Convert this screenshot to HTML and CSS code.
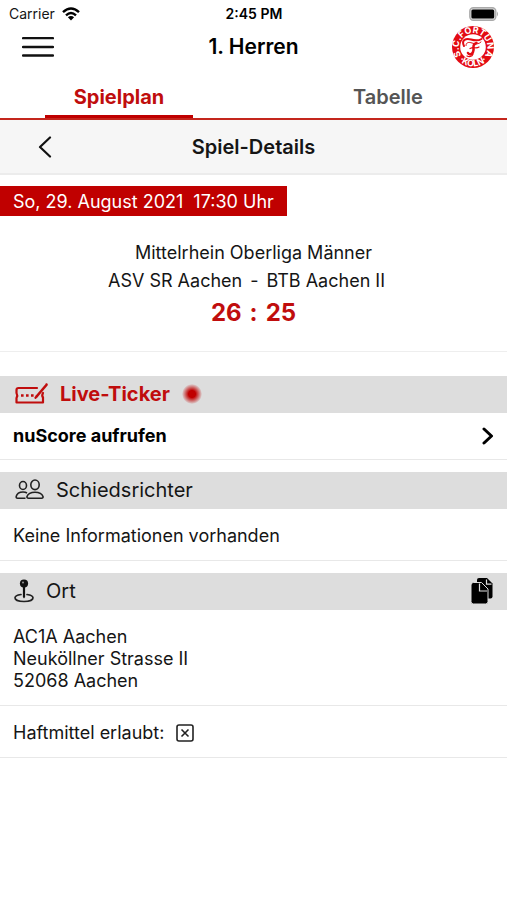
FILE: index.html
```
<!DOCTYPE html>
<html lang="de">
<head>
<meta charset="utf-8">
<meta name="viewport" content="width=device-width, initial-scale=1">
<title>Spiel-Details</title>
<link rel="stylesheet" href="styles.css">
</head>
<body>
<div class="status">
  <div class="carrier">
    <span>Carrier</span>
    <svg width="18" height="14" viewBox="0 0 18 14" aria-hidden="true">
      <g fill="none" stroke="#000" stroke-width="2.4">
        <path d="M1 5.2Q9-2.4 17 5.2"/>
        <path d="M4 8.4Q9 3.8 14 8.4"/>
      </g>
      <path d="M5.9 10.2Q9 7.6 12.1 10.2L9 13.6Z"/>
    </svg>
  </div>
  <span class="time">2:45 PM</span>
  <svg class="battery" width="30" height="14" viewBox="0 0 30 14" aria-hidden="true">
    <rect x=".8" y=".8" width="26" height="12.4" rx="3.5" fill="#ddd" stroke="#aaa" stroke-width="1.4"/>
    <rect x="2.4" y="2.4" width="22.8" height="9.2" rx="1.500"/>
    <path d="M28 4.5q2 2.500 0 5z" fill="#aaa"/>
  </svg>
</div>
<header class="topbar">
  <button class="icon-button menu" aria-label="Menü">
    <svg width="32" height="22" viewBox="0 0 32 22"><path d="M1 2.200H31M1 11H31M1 19.500H31" stroke="#111" stroke-width="2.300" stroke-linecap="round"/></svg>
  </button>
  <h1>1. Herren</h1>
  <svg class="club" width="42" height="42" viewBox="0 0 42 42" role="img" aria-label="S.C. Fortuna Köln">
    <defs>
      <path id="ring-top" d="M9 29A14.300 14.300 0 1 1 33 29"/>
      <path id="ring-bottom" d="M1.500 24A19.800 19.800 0 0 0 40.500 24"/>
    </defs>
    <circle cx="21" cy="21" r="21" fill="#e30b13"/>
    <circle cx="21" cy="21" r="12.800" fill="#fff"/>
    <g class="club-text">
      <text><textPath href="#ring-top" startOffset="50%" text-anchor="middle">S.C.FORTUNA</textPath></text>
      <text><textPath href="#ring-bottom" startOffset="50%" text-anchor="middle">·KÖLN·</textPath></text>
    </g>
    <g fill="none" stroke="#e30b13" stroke-linecap="round">
      <path d="M12 20C9 14 14 12 19 13.500C24 15 27 14.500 29.500 13" stroke-width="2"/>
      <path d="M14 19.500C14 16 17 16 20 17C24 18.500 27 18 29 16" stroke-width="1"/>
      <path d="M24.500 17C19 19 23 22 21 26C20 29 17 29 16 27" stroke-width="2.600"/>
      <path d="M18 22.500C22 20.500 24 23 27 21M21 28C20 31 17 31 15 30" stroke-width="1.200"/>
    </g>
  </svg>
</header>
<nav class="tabs">
  <a class="tab active" href="#spielplan" aria-current="page">Spielplan</a>
  <a class="tab" href="#tabelle">Tabelle</a>
</nav>
<div class="subbar">
  <button class="icon-button" aria-label="Zurück">
    <svg width="14" height="22" viewBox="0 0 14 22"><path d="M12 1.500L2 11L12 20.500" fill="none" stroke="#111" stroke-width="2.200" stroke-linecap="round" stroke-linejoin="round"/></svg>
  </button>
  <h2>Spiel-Details</h2>
</div>
<main>
  <section class="match">
    <p class="date"><span>So, 29. August 2021</span><span>17:30 Uhr</span></p>
    <div class="result">
      <p>Mittelrhein Oberliga Männer</p>
      <p class="teams"><span>ASV SR Aachen</span><span>-</span><span>BTB Aachen II</span></p>
      <p class="score"><span>26</span><span>:</span><span>25</span></p>
    </div>
  </section>
  <section class="block">
    <h3 class="bar live">
      <svg width="34" height="22" viewBox="0 0 34 22" aria-hidden="true">
        <g fill="none" stroke="#c00d0d" stroke-width="2.200" stroke-linecap="round" stroke-linejoin="round">
          <path d="M23 5H4.500Q2.500 5 2.500 7V10Q4 12.500 2.500 15V19.500H29V14.500Q27.500 12.500 29 10"/>
          <path d="M23 13L31.500 3" stroke-width="2.600"/>
          <path d="M21.500 14.800L23 13"/>
        </g>
        <path d="M31 1L33 0L34 2L32.500 3.500Z" fill="#c00d0d"/>
        <path d="M7 11.200h2.600v2.600H7zM12 11.200h2.600v2.600H12zM17 11.200h2.600v2.600H17z" fill="#c00d0d"/>
      </svg>
      <span>Live-Ticker</span>
      <i class="pulse"></i>
    </h3>
    <a class="row link" href="#nuscore">
      <span>nuScore aufrufen</span>
      <svg width="12" height="18" viewBox="0 0 12 18" aria-hidden="true"><path d="M2 2L9.500 9L2 16" fill="none" stroke="#000" stroke-width="3" stroke-linecap="round" stroke-linejoin="round"/></svg>
    </a>
  </section>
  <section class="block">
    <h3 class="bar">
      <svg width="30" height="22" viewBox="0 0 30 22" fill="none" stroke="#222" stroke-width="1.600" stroke-linejoin="round" aria-hidden="true">
        <ellipse cx="9" cy="6.500" rx="3.500" ry="4"/>
        <ellipse cx="21" cy="5.800" rx="4.200" ry="4.800"/>
        <path d="M11.500 19.200H3.500Q2 19.200 2.200 17.500Q3.200 13 9 13Q11.500 13 13 14"/>
        <path d="M14.500 19.200Q12.700 19.200 13 17.500Q14.500 13.200 21 13.200T29 17.500Q29.300 19.200 27.600 19.200Z"/>
      </svg>
      <span>Schiedsrichter</span>
    </h3>
    <p class="row">Keine Informationen vorhanden</p>
  </section>
  <section class="block">
    <h3 class="bar">
      <svg width="20" height="24" viewBox="0 0 20 24" aria-hidden="true">
        <path d="M7 15.500C3 16 1 17.300 1 18.800C1 21 5 22.500 10 22.500S19 21 19 18.800C19 17.300 17 16 13 15.500" fill="none" stroke="#222" stroke-width="1.700" stroke-linecap="round"/>
        <path d="M8.900 7H11.100V18L10 19.500L8.900 18Z" fill="#111"/>
        <circle cx="10" cy="4.600" r="4.100" fill="#111"/>
        <circle cx="9" cy="3.400" r="1" fill="#999"/>
      </svg>
      <span>Ort</span>
      <button class="icon-button copy" aria-label="Adresse kopieren">
        <svg width="22" height="26" viewBox="0 0 22 26">
          <path d="M8 0H16L21.500 5.500V18.500Q21.500 20.500 19.500 20.500H8Q6 20.500 6 18.500V2Q6 0 8 0Z"/>
          <path d="M15.500 1.500V6.200H20.500" fill="none" stroke="#ddd" stroke-width="1.200"/>
          <path d="M2.500 4.500H10.500L17 11V23.500Q17 26 14.500 26H2.500Q0 26 0 23.500V7Q0 4.500 2.500 4.500Z" stroke="#ddd" stroke-width="1"/>
          <path d="M8.500 5.500V13H16" fill="none" stroke="#ddd" stroke-width="1.200"/>
        </svg>
      </button>
    </h3>
    <address class="row">AC1A Aachen<br>Neuköllner Strasse II<br>52068 Aachen</address>
    <p class="row adhesive">
      <span>Haftmittel erlaubt:</span>
      <svg width="18" height="18" viewBox="0 0 18 18" role="img" aria-label="Nein"><rect x="1" y="1" width="16" height="16" rx="2" fill="none" stroke="#222" stroke-width="1.600"/><path d="M5.500 5.500L12.500 12.500M12.500 5.500L5.500 12.500" stroke="#222" stroke-width="1.600"/></svg>
    </p>
  </section>
</main>
</body>
</html>
```

FILE: styles.css
```
* {
  box-sizing: border-box;
}

body,
h1,
h2,
h3,
p {
  margin: 0;
}

body {
  background: #fff;
  color: #151515;
  font-family: Inter, "Liberation Sans", sans-serif;
  font-size: 18px;
  line-height: 22px;
}

svg {
  display: block;
  flex: none;
}

a {
  color: inherit;
  text-decoration: none;
}

.icon-button {
  display: flex;
  padding: 0;
  border: 0;
  background: none;
  color: #000;
}

.status,
.topbar,
.subbar {
  display: grid;
  grid-template-columns: 1fr auto 1fr;
  align-items: center;
}

.status {
  height: 26px;
  padding: 1px 8px 0 9px;
  font-size: 14px;
}

.carrier {
  display: flex;
  align-items: center;
  gap: 7px;
}

.time {
  font-weight: 600;
}

.battery,
.club {
  justify-self: end;
}

.topbar {
  height: 42px;
  padding: 0 13px;
}

.menu {
  padding-left: 9px;
}

h1,
h2 {
  font-size: 20px;
  font-weight: 600;
  line-height: 24px;
}

h1 {
  font-size: 21px;
}

h1,
.time {
  color: #000;
}

.club {
  overflow: visible;
}

.club-text {
  fill: #fff;
  font-size: 9px;
  font-weight: 700;
}

.tabs {
  display: flex;
  justify-content: space-between;
  padding: 6px 45px 0;
  border-bottom: 2px solid #c4261d;
}

.tab {
  width: 148px;
  padding: 12px 0 7px;
  border-bottom: 3px solid transparent;
  color: #555;
  font-size: 20px;
  font-weight: 600;
  text-align: center;
}

.active {
  border-color: #c00000;
  color: #c00d0d;
  font-weight: 700;
}

.subbar {
  height: 55px;
  padding: 0 38px;
  border-bottom: 2px solid #ececec;
  background: #f6f6f6;
}

.match {
  padding: 11px 0 23px;
  border-bottom: 1px solid #eee;
}

.date {
  display: flex;
  gap: 10px;
  width: fit-content;
  padding: 5px 13px 3px;
  background: #c00000;
  color: #fff;
}

.result {
  display: grid;
  gap: 6px;
  margin-top: 26px;
  text-align: center;
}

.teams,
.score {
  display: flex;
  justify-content: center;
  gap: 8px;
}

.teams {
  padding-right: 14px;
}

.score {
  color: #c00d0d;
  font-size: 24px;
  font-weight: 700;
  line-height: 30px;
}

.block {
  margin-top: 12px;
}

.match + .block {
  margin-top: 24px;
}

.bar {
  display: flex;
  align-items: center;
  gap: 12px;
  height: 37px;
  padding: 0 14px 2px;
  background: #ddd;
  font-size: 20px;
  font-weight: 400;
}

.live {
  color: #c00d0d;
  font-weight: 700;
}

.pulse {
  width: 20px;
  height: 20px;
  border-radius: 50%;
  background: radial-gradient(circle, #c00000 25%, #c0000000 72%);
}

.copy {
  margin-left: auto;
}

.row {
  display: block;
  padding: 16px 13px 13px;
  border-bottom: 1px solid #e8e8e8;
  font-style: normal;
}

.link {
  display: flex;
  align-items: center;
  justify-content: space-between;
  padding: 12px 13px;
  color: #000;
  font-weight: 700;
}

.adhesive {
  display: flex;
  align-items: center;
  gap: 12px;
}
```
